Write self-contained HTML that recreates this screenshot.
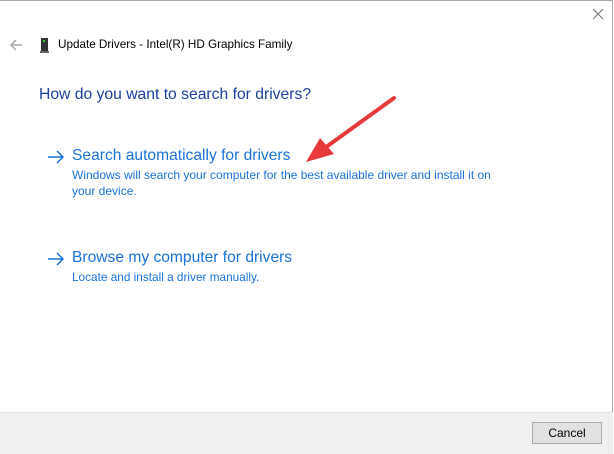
<!DOCTYPE html>
<html><head><meta charset="utf-8"><style>
html,body{margin:0;padding:0}
body{width:614px;height:454px;position:relative;overflow:hidden;background:#fff;font-family:"Liberation Sans",sans-serif}
.frame{position:absolute;left:0;top:0;width:612px;height:452px;border:1px solid #aaa;border-left:none}
.t{position:absolute;white-space:nowrap}
.footer{position:absolute;left:0;top:412px;width:613px;height:41px;background:#f0f0f0;border-top:1px solid #dfdfdf}
.btn{position:absolute;left:532px;top:422px;width:68px;height:20px;background:#e1e1e1;border:1px solid #adadad;font-size:12px;text-align:center;line-height:20px;color:#000}
</style></head><body>
<div class="frame"></div>
<svg style="position:absolute;left:592px;top:8px" width="12" height="12"><path d="M1 1L11 11M11 1L1 11" stroke="#777" stroke-width="1"/></svg>
<svg style="position:absolute;left:9px;top:39px" width="14" height="12"><path d="M13 6H2M7 1L2 6L7 11" stroke="#aaa" stroke-width="1.5" fill="none"/></svg>
<svg style="position:absolute;left:40px;top:38px" width="9" height="15"><rect x="1" y="0" width="7" height="14" fill="#333"/><rect x="3" y="2" width="2" height="2" fill="#3c3"/><rect x="0" y="13" width="9" height="2" fill="#666"/></svg>
<div class="t" style="left:58px;top:38px;font-size:11.7px;color:#000">Update Drivers - Intel(R) HD Graphics Family</div>
<div class="t" style="left:39px;top:86px;font-size:15.7px;color:#1a3f9c">How do you want to search for drivers?</div>
<svg style="position:absolute;left:47px;top:150px" width="18" height="14"><path d="M1 7H16M10 1L16 7L10 13" stroke="#1a73d9" stroke-width="1.5" fill="none"/></svg>
<div class="t" style="left:72px;top:147px;font-size:15.6px;color:#1a73d9">Search automatically for drivers</div>
<div class="t" style="left:72px;top:167px;font-size:12px;color:#1a73d9;line-height:16px">Windows will search your computer for the best available driver and install it on<br>your device.</div>
<svg style="position:absolute;left:47px;top:252px" width="18" height="14"><path d="M1 7H16M10 1L16 7L10 13" stroke="#1a73d9" stroke-width="1.5" fill="none"/></svg>
<div class="t" style="left:72px;top:249px;font-size:15.6px;color:#1a73d9">Browse my computer for drivers</div>
<div class="t" style="left:72px;top:270px;font-size:11.8px;color:#1a73d9">Locate and install a driver manually.</div>
<svg style="position:absolute;left:300px;top:90px" width="110" height="80"><path d="M94 8L22 60" stroke="#e8393b" stroke-width="4" stroke-linecap="round"/><path d="M6 72L20 48L34 64Z" fill="#e8393b"/></svg>
<div class="footer"></div>
<div class="btn">Cancel</div>
</body></html>
